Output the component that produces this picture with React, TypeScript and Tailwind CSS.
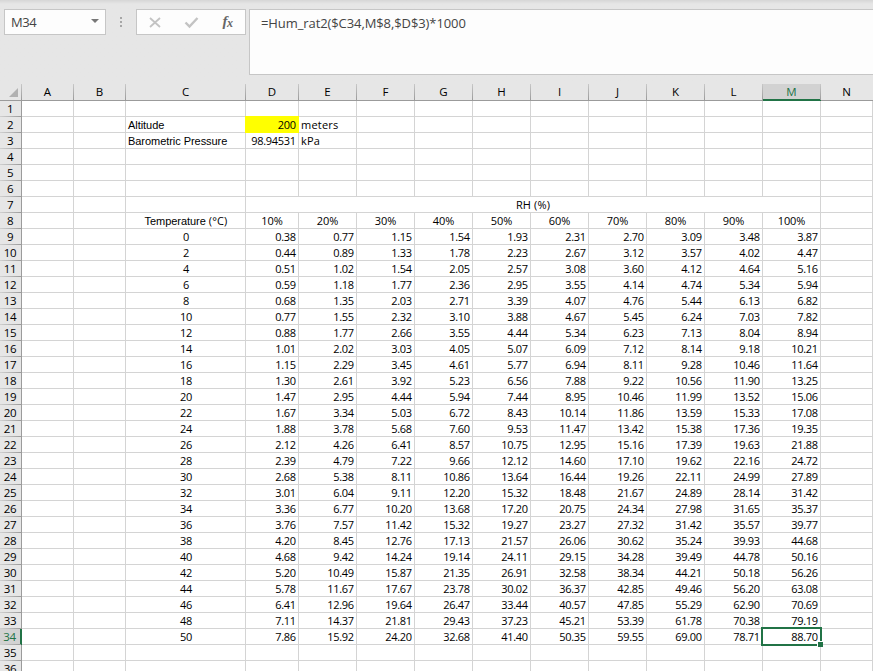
import clsx from "clsx";

const COLUMNS = ["A", "B", "C", "D", "E", "F", "G", "H", "I", "J", "K", "L", "M", "N"];
const ROW_COUNT = 36;
const ACTIVE = { col: "M", row: 34 };

const HUMIDITY = ["10%", "20%", "30%", "40%", "50%", "60%", "70%", "80%", "90%", "100%"];

// first value is the temperature, the rest are the ratios for each RH column
const TABLE = [
  "0 0.38 0.77 1.15 1.54 1.93 2.31 2.70 3.09 3.48 3.87",
  "2 0.44 0.89 1.33 1.78 2.23 2.67 3.12 3.57 4.02 4.47",
  "4 0.51 1.02 1.54 2.05 2.57 3.08 3.60 4.12 4.64 5.16",
  "6 0.59 1.18 1.77 2.36 2.95 3.55 4.14 4.74 5.34 5.94",
  "8 0.68 1.35 2.03 2.71 3.39 4.07 4.76 5.44 6.13 6.82",
  "10 0.77 1.55 2.32 3.10 3.88 4.67 5.45 6.24 7.03 7.82",
  "12 0.88 1.77 2.66 3.55 4.44 5.34 6.23 7.13 8.04 8.94",
  "14 1.01 2.02 3.03 4.05 5.07 6.09 7.12 8.14 9.18 10.21",
  "16 1.15 2.29 3.45 4.61 5.77 6.94 8.11 9.28 10.46 11.64",
  "18 1.30 2.61 3.92 5.23 6.56 7.88 9.22 10.56 11.90 13.25",
  "20 1.47 2.95 4.44 5.94 7.44 8.95 10.46 11.99 13.52 15.06",
  "22 1.67 3.34 5.03 6.72 8.43 10.14 11.86 13.59 15.33 17.08",
  "24 1.88 3.78 5.68 7.60 9.53 11.47 13.42 15.38 17.36 19.35",
  "26 2.12 4.26 6.41 8.57 10.75 12.95 15.16 17.39 19.63 21.88",
  "28 2.39 4.79 7.22 9.66 12.12 14.60 17.10 19.62 22.16 24.72",
  "30 2.68 5.38 8.11 10.86 13.64 16.44 19.26 22.11 24.99 27.89",
  "32 3.01 6.04 9.11 12.20 15.32 18.48 21.67 24.89 28.14 31.42",
  "34 3.36 6.77 10.20 13.68 17.20 20.75 24.34 27.98 31.65 35.37",
  "36 3.76 7.57 11.42 15.32 19.27 23.27 27.32 31.42 35.57 39.77",
  "38 4.20 8.45 12.76 17.13 21.57 26.06 30.62 35.24 39.93 44.68",
  "40 4.68 9.42 14.24 19.14 24.11 29.15 34.28 39.49 44.78 50.16",
  "42 5.20 10.49 15.87 21.35 26.91 32.58 38.34 44.21 50.18 56.26",
  "44 5.78 11.67 17.67 23.78 30.02 36.37 42.85 49.46 56.20 63.08",
  "46 6.41 12.96 19.64 26.47 33.44 40.57 47.85 55.29 62.90 70.69",
  "48 7.11 14.37 21.81 29.43 37.23 45.21 53.39 61.78 70.38 79.19",
  "50 7.86 15.92 24.20 32.68 41.40 50.35 59.55 69.00 78.71 88.70",
].map((line) => line.split(" "));

const GRID = "grid grid-cols-[22px_52px_52px_120px_53px_repeat(9,58px)_52px]";

function cellText(col: string, row: number) {
  if (row === 8 && col >= "D" && col <= "M") return HUMIDITY[COLUMNS.indexOf(col) - 3];
  if (row >= 9 && row <= 34 && col >= "C" && col <= "M") return TABLE[row - 9][COLUMNS.indexOf(col) - 2];
  if (row === 2) return { C: "Altitude", D: "200", E: "meters" }[col];
  if (row === 3) return { C: "Barometric Pressure", D: "98.94531", E: "kPa" }[col];
  return undefined;
}

function Cell({ col, row }: { col: string; row: number }) {
  const text = cellText(col, row);
  const centered = row === 8 || (row >= 9 && col === "C");
  const label = row < 8 && (col === "C" || col === "E");
  const active = col === ACTIVE.col && row === ACTIVE.row;

  return (
    <div
      className={clsx(
        "relative h-4 border-r border-b border-[#d4d4d4] leading-4 whitespace-nowrap",
        active && "z-10",
        centered ? "text-center" : label ? "pl-0.5 text-left" : "pr-[2.2px] text-right",
        col === "C" && row >= 8 && "pl-px",
        col === "C" && row < 9 && "font-['Liberation_Sans',sans-serif] tracking-[-0.05px]",
        col === "E" && label && "tracking-[0.2px]",
        row === 8 && col !== "C" && "tracking-[-0.1px]",
      )}
    >
      {col === "D" && row === 2 && <span className="absolute -top-px -right-px -bottom-px -left-px bg-[#ffff00]" />}
      {col === "C" && row === 8 ? (
        <span>
          Temperature <span className="font-['Open_Sans',sans-serif] text-[11px] tracking-[0.15px]">(°C)</span>
        </span>
      ) : (
        <span className="relative">{text}</span>
      )}
      {active && (
        <span className="absolute -top-[2px] -left-[2px] h-[19px] w-[61px] border-2 border-[#217346]">
          <span className="absolute -right-[3px] -bottom-[3px] size-[6px] border-t border-l border-white bg-[#217346]" />
        </span>
      )}
    </div>
  );
}

function FormulaBar() {
  return (
    <div className="flex h-[84px] items-start bg-linear-to-b from-[#d6d6d6] to-[#e6e6e6] to-[4px] pt-[9px] pl-1 font-['Open_Sans',sans-serif] text-[#444444]">
      <div className="flex h-[26px] w-[102px] items-center justify-between border border-[#c6c6c6] bg-[#fdfdfd] pr-1.5 pl-1.5 text-[13px] tracking-[-0.4px]">
        <span className="pt-px">M34</span>
        <svg width="8" height="4" viewBox="0 0 8 4" className="mb-[3px]">
          <path d="M0 0h8L4 4z" fill="#777" />
        </svg>
      </div>
      <div className="flex h-[26px] w-[30px] items-center justify-center">
        <svg width="2" height="10" viewBox="0 0 2 10" fill="#a6a6a6">
          <path d="M0 0h2v2H0zM0 4h2v2H0zM0 8h2v2H0z" />
        </svg>
      </div>
      <div className="h-[26px] w-[110px] border border-[#c6c6c6] bg-[#fdfdfd]">
        <svg width="108" height="24" viewBox="0 0 108 24" fill="none">
          <path d="M13 8l10 9M23 8l-10 9" stroke="#c3c3c3" strokeWidth="1.8" />
          <path d="M48.500 12.500l4 4 8-8.500" stroke="#c3c3c3" strokeWidth="2.400" />
          <text x="85.500" y="16" fill="#666" fontFamily="Liberation Serif, serif" fontStyle="italic" fontWeight="700" fontSize="15">
            f
          </text>
          <text x="90" y="17" fill="#666" fontFamily="Liberation Serif, serif" fontStyle="italic" fontWeight="700" fontSize="12">
            x
          </text>
        </svg>
      </div>
      <div className="ml-[3px] h-[66px] flex-1 border border-r-0 border-[#c6c6c6] bg-[#fdfdfd] pt-[3px] pl-[11px] text-[13px] leading-[20px] tracking-[-0.09px]">
        =Hum_rat2($C34,M$8,$D$3)*1000
      </div>
    </div>
  );
}

export default function App() {
  return (
    <div className="h-[671px] w-[873px] overflow-hidden bg-[#e6e6e6]">
      <FormulaBar />
      <div className="font-['Open_Sans',sans-serif] text-[11px] tracking-[-0.29px] text-black">
        <div className={clsx(GRID, "h-[17px] text-center")}>
          <div className="flex items-end justify-end border-b border-[#9b9b9b] pr-1 pb-[3px]">
            <svg width="9" height="9" viewBox="0 0 9 9">
              <path d="M9 0v9H0z" fill="#b1b1b1" />
            </svg>
          </div>
          {COLUMNS.map((col) => (
            <div
              key={col}
              className={clsx(
                "relative h-[17px] pr-px text-[11.5px] leading-4 tracking-normal",
                col === ACTIVE.col
                  ? "border-b-2 border-[#217346] bg-[#d2d2d2] text-[#217346]"
                  : "border-b border-[#9b9b9b]",
              )}
            >
              <span className="absolute top-0 -left-px h-4 w-px bg-linear-to-b from-[#c8c8c8] to-[#9b9b9b]" />
              {col}
            </div>
          ))}
        </div>
        {Array.from({ length: ROW_COUNT }, (_, i) => i + 1).map((row) => (
          <div key={row} className={clsx(GRID, "h-4 bg-white")}>
            <div
              className={clsx(
                "relative h-4 pr-px text-center text-[11.5px] leading-4 tracking-[-0.4px]",
                row === ACTIVE.row
                  ? "border-r-2 border-[#217346] bg-[#d2d2d2] text-[#217346]"
                  : "border-r border-[#9b9b9b] bg-[#e6e6e6]",
              )}
            >
              {row}
              <span className="absolute bottom-0 left-0 h-px w-[21px] bg-linear-to-r from-[#d0d0d0] to-[#9b9b9b]" />
            </div>
            {row === 7 ? (
              <>
                <Cell col="A" row={row} />
                <Cell col="B" row={row} />
                <Cell col="C" row={row} />
                <div className="col-span-10 h-4 border-r border-b border-[#d4d4d4] text-center leading-4 tracking-[0.15px]">
                  RH (%)
                </div>
                <Cell col="N" row={row} />
              </>
            ) : (
              COLUMNS.map((col) => <Cell key={col} col={col} row={row} />)
            )}
          </div>
        ))}
      </div>
    </div>
  );
}
